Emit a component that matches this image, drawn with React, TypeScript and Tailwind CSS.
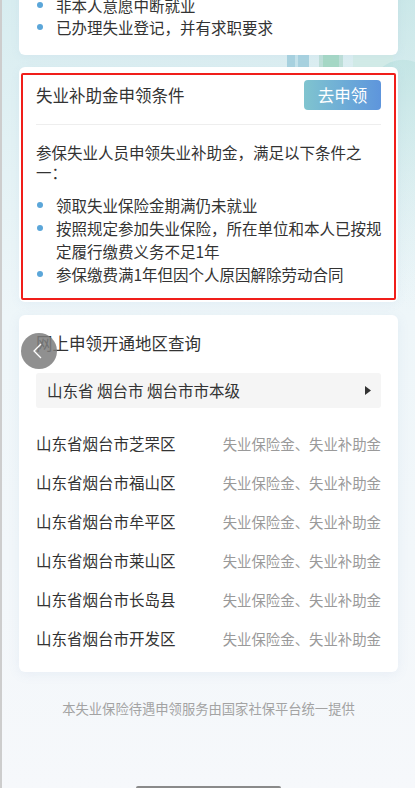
import React from 'react';

const font = { fontFamily: '"Noto Sans CJK SC", "Noto Sans", sans-serif' };

const regions = ['芝罘区', '福山区', '牟平区', '莱山区', '长岛县', '开发区'];

function Dot() {
  return <span className="mt-[8px] h-[6px] w-[6px] shrink-0 rounded-full bg-[#5ba6d9]" />;
}

function Bullet({ children }: { children: React.ReactNode }) {
  return (
    <li className="flex items-start gap-[13px] pl-[1px]">
      <Dot />
      <span>{children}</span>
    </li>
  );
}

// decorative skyline behind the cards
function Skyline() {
  return (
    <svg className="absolute right-0 top-0 z-0" width="140" height="310" viewBox="0 0 140 310">
      <defs>
        <linearGradient id="fade" x1="0" y1="0" x2="0" y2="1">
          <stop offset="0" stopColor="#bfe3e2" stopOpacity="0.9" />
          <stop offset="1" stopColor="#e6f3f6" stopOpacity="0" />
        </linearGradient>
      </defs>
      <rect x="12" y="40" width="22" height="40" fill="#a9d3e0" />
      <rect x="20" y="40" width="3" height="40" fill="#c6e4ec" />
      <rect x="44" y="30" width="24" height="50" fill="#bfe0d9" />
      <rect x="48" y="30" width="16" height="50" fill="#a7d9c6" />
      <rect x="78" y="35" width="40" height="40" fill="#d3ece8" />
      <path d="M104 70 Q120 55 140 62 L140 310 L118 310 L118 80 Z" fill="url(#fade)" />
      <rect x="118" y="0" width="22" height="310" fill="url(#fade)" opacity="0.6" />
    </svg>
  );
}

export default function App() {
  return (
    <div
      style={font}
      className="relative h-[788px] w-[415px] overflow-hidden border-l-2 border-[#cdcdcd] bg-gradient-to-b from-[#d8edf0] via-[#eef6f9] via-40% to-[#f6f8fb] px-[17px] text-[#333]"
    >
      <Skyline />

      <div className="relative z-10">
        {/* card 1, scrolled out of view at the top */}
        <div className="-mt-[20px] rounded-md bg-white px-[17px] pb-[17px] pt-[14px] shadow-[0_2px_10px_rgba(120,150,200,0.08)]">
          <ul className="text-[15.5px] leading-[22px]">
            <Bullet>非本人意愿中断就业</Bullet>
            <Bullet>已办理失业登记，并有求职要求</Bullet>
          </ul>
        </div>

        {/* card 2 */}
        <div className="mt-[12px] rounded-md bg-white px-[2px] pb-[2px] pt-[6px] shadow-[0_2px_10px_rgba(120,150,200,0.08)]">
          <div className="rounded-[2px] border-2 border-[#f01e1a] px-[13px] pb-[12px] pt-[5px]">
            <div className="flex items-center justify-between">
              <h2 className="text-[16.5px] leading-[24px]">失业补助金申领条件</h2>
              <button className="h-[30px] w-[77px] rounded-[4px] bg-gradient-to-r from-[#80c4cf] to-[#5e95dc] text-[16.5px] text-white">
                去申领
              </button>
            </div>
            <div className="mt-[14px] h-px bg-[#eeeeee]" />
            <p className="mt-[17px] text-[15.5px] leading-[20px]">
              参保失业人员申领失业补助金，满足以下条件之一：
            </p>
            <ul className="-mr-[6px] mt-[12px] text-[15.5px] leading-[23px]">
              <Bullet>领取失业保险金期满仍未就业</Bullet>
              <Bullet>按照规定参加失业保险，所在单位和本人已按规定履行缴费义务不足1年</Bullet>
              <Bullet>参保缴费满1年但因个人原因解除劳动合同</Bullet>
            </ul>
          </div>
        </div>

        {/* card 3 */}
        <div className="mt-[13px] rounded-md bg-white px-[17px] pb-[14px] pt-[16px] shadow-[0_2px_12px_rgba(120,150,200,0.1)]">
          <h2 className="text-[16.5px] leading-[24px]">网上申领开通地区查询</h2>
          <div className="mt-[18px] flex h-[35px] items-center justify-between rounded-[3px] bg-[#f5f5f5] pl-[11px] pr-[10px]">
            <span className="text-[15.5px]">山东省 烟台市 烟台市市本级</span>
            <svg width="6" height="9" viewBox="0 0 6 9">
              <path d="M0 0 L6 4.5 L0 9 Z" fill="#333" />
            </svg>
          </div>
          <ul className="mt-[16px]">
            {regions.map((r) => (
              <li key={r} className="flex h-[39px] items-center justify-between">
                <span className="text-[15.5px]">山东省烟台市{r}</span>
                <span className="text-[14.4px] text-[#9a9a9a]">失业保险金、失业补助金</span>
              </li>
            ))}
          </ul>
        </div>

        <p className="mt-[27px] text-center text-[13.3px] leading-[20px] text-[#a3a3a3]">
          本失业保险待遇申领服务由国家社保平台统一提供
        </p>
      </div>

      {/* floating back button */}
      <div className="absolute left-[19px] top-[333px] z-20 flex h-[36px] w-[36px] items-center justify-center rounded-full bg-[#7d7d7d]/85">
        <svg width="12" height="16" viewBox="0 0 12 16" className="-ml-[3px]">
          <path d="M9 1 L2 8 L9 15" fill="none" stroke="#fff" strokeWidth="1.3" />
        </svg>
      </div>

      {/* home indicator */}
      <div className="absolute left-[134px] top-[786px] z-20 h-[4px] w-[145px] rounded-full bg-[#8a8a8a]" />
    </div>
  );
}
